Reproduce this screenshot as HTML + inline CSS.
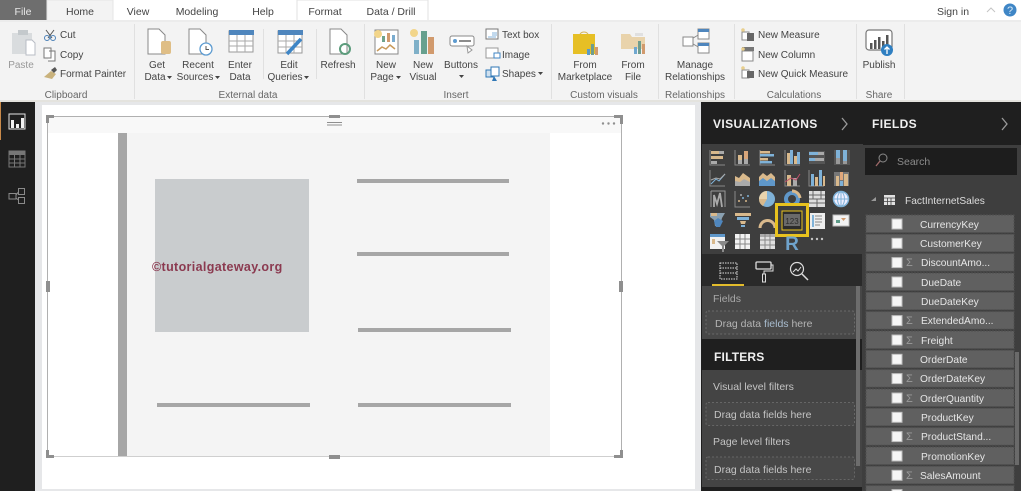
<!DOCTYPE html>
<html><head><meta charset="utf-8"><title>Power BI Desktop</title>
<style>
html,body{margin:0;padding:0;background:#fff;overflow:hidden;width:1021px;height:491px}
svg{display:block}
text{font-family:"Liberation Sans",sans-serif;font-size:10px;fill:#444}
.m{text-anchor:middle}
.g{font-size:10px;fill:#666}
.t{font-size:10.5px;fill:#444}
.h{font-size:12px;font-weight:bold;fill:#f0f0f0;letter-spacing:.4px}
.p{font-size:10.5px;fill:#c4c4c4}
.f{font-size:10.2px;fill:#e6e6e6}
.sg{font-size:11px;fill:#9a9a9a}
</style></head><body>
<svg width="1021" height="491" viewBox="0 0 1021 491" xmlns="http://www.w3.org/2000/svg">
<!-- tabs -->
<rect width="1021" height="21" fill="#fff"/>
<rect x="0" y="0" width="47" height="21" fill="#6e6e6e"/>
<text x="23" y="15" class="m t" style="fill:#e8e8e8">File</text>
<path d="M47 21V0H113V21" fill="#f3f3f3" stroke="#e6e6e6"/>
<text x="80" y="15" class="m t">Home</text>
<text x="138" y="15" class="m t">View</text>
<text x="197" y="15" class="m t">Modeling</text>
<text x="263" y="15" class="m t">Help</text>
<path d="M297 20V0H428V20" fill="#fff" stroke="#e2e2e2"/>
<text x="325" y="15" class="m t">Format</text>
<text x="391" y="15" class="m t">Data / Drill</text>
<text x="953" y="15" class="m t">Sign in</text>
<path d="M987 12l4-4 4 4" fill="none" stroke="#c4c4c4"/>
<circle cx="1010" cy="10" r="6.500" fill="#3f86c6"/>
<text x="1010" y="14" class="m" style="fill:#d8e8f4;font-size:11px">?</text>
<!-- ribbon -->
<rect y="21" width="1021" height="81" fill="#f3f3f3"/>
<rect y="20" width="1021" height="2" fill="#ececec"/>
<rect y="100" width="1021" height="2" fill="#e4e3de"/>
<g fill="#e0e0e0">
<rect x="134" y="24" width="1" height="75"/><rect x="263" y="29" width="1" height="50"/><rect x="316" y="29" width="1" height="50"/><rect x="364" y="24" width="1" height="75"/><rect x="551" y="24" width="1" height="75"/><rect x="658" y="24" width="1" height="75"/><rect x="734" y="24" width="1" height="75"/><rect x="856" y="24" width="1" height="75"/><rect x="904" y="24" width="1" height="75"/>
</g>
<!-- clipboard -->
<rect x="12" y="33" width="20" height="21" fill="#d9dcde"/><rect x="18" y="30" width="10" height="5" fill="#c4c9cc"/>
<path d="M26 40h6l3 3v12h-9z" fill="#fff" stroke="#b8bcc4"/>
<text x="21" y="68" class="m" style="fill:#999">Paste</text>
<path d="M46 30l6 8M54 30l-6 8" stroke="#555" fill="none"/><circle cx="47" cy="38" r="2.500" fill="none" stroke="#4d82b8"/><circle cx="53" cy="38" r="2.500" fill="none" stroke="#4d82b8"/>
<path d="M44 48h7l0 10h-7z M49 51h6v10h-7" fill="#fff" stroke="#777"/>
<path d="M44 77l7-6 5 3-4 5z" fill="#c9b27c"/><path d="M51 70l4-3 2 3-3 3z" fill="#555"/>
<text x="60" y="38">Cut</text><text x="60" y="58">Copy</text><text x="60" y="77">Format Painter</text>
<text x="66" y="98" class="m g">Clipboard</text>
<!-- external data -->
<path d="M148 29h11l6 6v19h-17z" fill="#fff" stroke="#888"/><rect x="161" y="41" width="10" height="13" rx="2" fill="#dfbe86"/>
<text x="157" y="68" class="m">Get</text><text x="155" y="80" class="m">Data</text><path d="M167 76h5l-2.500 3z" fill="#444"/>
<path d="M189 29h11l6 6v19h-17z" fill="#fff" stroke="#888"/><circle cx="206" cy="49" r="6" fill="#fff" stroke="#5d9bd0" stroke-width="1.300"/><path d="M206 46v3.500h3" stroke="#555" fill="none"/>
<text x="198" y="68" class="m">Recent</text><text x="195" y="80" class="m">Sources</text><path d="M215 76h5l-2.500 3z" fill="#444"/>
<rect x="229" y="31" width="24" height="21" fill="#fff" stroke="#999"/><rect x="229" y="30" width="25" height="5" fill="#4f86bd"/><path d="M229 41h24M229 46h24M237 35v17M245 35v17" stroke="#aaa"/>
<text x="240" y="68" class="m">Enter</text><text x="240" y="80" class="m">Data</text>
<rect x="278" y="31" width="24" height="22" fill="#fff" stroke="#999"/><rect x="278" y="30" width="25" height="5" fill="#4f86bd"/><path d="M278 41h24M278 47h24M286 35v18M294 35v18" stroke="#aaa"/><path d="M287 54l14-15" stroke="#3f86c6" stroke-width="3.500"/>
<text x="289" y="68" class="m">Edit</text><text x="285" y="80" class="m">Queries</text><path d="M304 76h5l-2.500 3z" fill="#444"/>
<text x="248" y="98" class="m g">External data</text>
<path d="M330 29h11l6 6v19h-17z" fill="#fff" stroke="#888"/><circle cx="345" cy="49" r="5" fill="none" stroke="#5c9c7c" stroke-width="2"/>
<text x="338" y="68" class="m">Refresh</text>
<!-- insert -->
<rect x="375" y="30" width="23" height="24" fill="#fff" stroke="#888"/><rect x="382" y="36" width="3" height="6" fill="#6fa38c"/><rect x="387" y="33" width="3" height="9" fill="#d19a6d"/><rect x="392" y="35" width="3" height="7" fill="#7aaccf"/><path d="M377 51l5-4 4 2 4-4 5 4" fill="none" stroke="#c99a5a" stroke-width="1.500"/><circle cx="378" cy="34" r="4" fill="#f2d58a"/>
<text x="386" y="68" class="m">New</text><text x="382" y="80" class="m">Page</text><path d="M396 76h5l-2.500 3z" fill="#444"/>
<rect x="414" y="40" width="5" height="14" fill="#7fb0c8"/><rect x="421" y="31" width="6" height="23" fill="#67a08e"/><rect x="428" y="37" width="6" height="17" fill="#d19a6d"/><circle cx="414" cy="33" r="4" fill="#f2d58a"/>
<text x="423" y="68" class="m">New</text><text x="423" y="80" class="m">Visual</text>
<rect x="450" y="36" width="24" height="10" rx="2" fill="#fff" stroke="#888"/><circle cx="455" cy="41" r="2" fill="#5d9bd0"/><path d="M459 41h12" stroke="#666" stroke-width="1.500"/><path d="M467 46l1 7 4-3z" fill="#fff" stroke="#999"/>
<text x="461" y="68" class="m">Buttons</text><path d="M459 75h5l-2.500 3z" fill="#444"/>
<rect x="486" y="29" width="12" height="10" fill="#fff" stroke="#777"/><path d="M492 33h5M492 35h5M488 37h8" stroke="#5d9bd0" stroke-width=".8"/>
<text x="502" y="38">Text box</text>
<rect x="486" y="48" width="12" height="10" fill="#fff" stroke="#999"/><rect x="494" y="53" width="6" height="5" fill="#fff" stroke="#3f86c6"/>
<text x="502" y="58">Image</text>
<rect x="486" y="70" width="7" height="7" fill="#cfe0ef" stroke="#2f77b5"/><rect x="491" y="67" width="8" height="9" fill="#fff" stroke="#2f77b5"/><path d="M492 81l2-5 3 5z" fill="#2f77b5"/>
<text x="502" y="77">Shapes</text><path d="M538 72h5l-2.500 3z" fill="#444"/>
<text x="456" y="98" class="m g">Insert</text>
<!-- custom visuals -->
<path d="M573 34h22v20h-22z" fill="#e6bf25"/><path d="M580 34a5 5 0 0 1 8 0" fill="none" stroke="#d5b45a"/>
<rect x="587" y="49" width="3" height="6" fill="#5b9bc8"/><rect x="591" y="44" width="3" height="11" fill="#6f9d8e"/><rect x="595" y="47" width="3" height="8" fill="#d19a6d"/>
<text x="585" y="68" class="m">From</text><text x="585" y="80" class="m">Marketplace</text>
<path d="M621 34h9l2 3h13v12h-24z" fill="#e9d3ab"/><rect x="635" y="33" width="8" height="3" fill="#e0e0e0"/>
<rect x="634" y="47" width="3" height="7" fill="#6fa7cf"/><rect x="638" y="41" width="3" height="13" fill="#6f9d8e"/><rect x="642" y="44" width="3" height="10" fill="#d19a6d"/>
<text x="633" y="68" class="m">From</text><text x="633" y="80" class="m">File</text>
<text x="604" y="98" class="m g">Custom visuals</text>
<!-- relationships -->
<path d="M688 41l12-7M688 41l12 7" stroke="#888" fill="none"/>
<rect x="683" y="37" width="10" height="9" fill="#fff" stroke="#888"/><rect x="698" y="29" width="11" height="10" fill="#fff" stroke="#888"/><rect x="698" y="29" width="11" height="3" fill="#4f86bd"/><rect x="698" y="43" width="11" height="10" fill="#fff" stroke="#888"/><rect x="698" y="43" width="11" height="3" fill="#4f86bd"/>
<text x="695" y="68" class="m">Manage</text><text x="695" y="80" class="m">Relationships</text>
<text x="695" y="98" class="m g">Relationships</text>
<!-- calculations -->
<g fill="#fff" stroke="#888"><rect x="742" y="32" width="7" height="8"/><rect x="742" y="51" width="11" height="10"/><rect x="742" y="70" width="7" height="8"/></g>
<rect x="747" y="33" width="7" height="8" fill="#666"/><rect x="747" y="71" width="7" height="7" fill="#666"/><rect x="742" y="47" width="12" height="4" fill="#777"/><circle cx="743" cy="30" r="1.800" fill="#e8cf8e"/><circle cx="743" cy="49" r="1.800" fill="#e8cf8e"/><circle cx="743" cy="68" r="1.800" fill="#e8cf8e"/>
<text x="758" y="38">New Measure</text><text x="758" y="58">New Column</text><text x="758" y="77">New Quick Measure</text>
<text x="794" y="98" class="m g">Calculations</text>
<!-- publish -->
<rect x="866" y="30" width="26" height="20" rx="3" fill="#fff" stroke="#777" stroke-width="1.200"/>
<rect x="870" y="43" width="2.500" height="6" fill="#555"/><rect x="874" y="40" width="2.500" height="9" fill="#555"/><rect x="878" y="37" width="2.500" height="12" fill="#555"/><rect x="882" y="41" width="2.500" height="8" fill="#555"/><rect x="886" y="35" width="2.500" height="14" fill="#555"/>
<circle cx="887" cy="50" r="6" fill="#2f7fc1"/><path d="M887 54v-7M884.500 49.500l2.500-2.500 2.500 2.500" stroke="#fff" stroke-width="1.300" fill="none"/>
<text x="879" y="68" class="m">Publish</text>
<text x="879" y="98" class="m g">Share</text>

<!-- left nav -->
<rect y="102" width="35" height="389" fill="#1f1f1f"/>
<rect x="0" y="102" width="1" height="38" fill="#c98a4a"/>
<rect x="9" y="114" width="16" height="15" fill="none" stroke="#e6e6e6"/>
<rect x="11" y="120" width="3" height="8" fill="#f2f2f2"/><rect x="16" y="124" width="3" height="4" fill="#f2f2f2"/><rect x="21" y="118" width="3" height="10" fill="#f2f2f2"/>
<rect x="9" y="151" width="16" height="16" fill="none" stroke="#777"/><rect x="9" y="151" width="16" height="4" fill="#777"/><path d="M9 159h16M9 163h16M14.500 155v12M20 155v12" stroke="#777"/>
<g fill="none" stroke="#8a8a8a"><rect x="9" y="193.500" width="7" height="5.500"/><rect x="18.500" y="188.500" width="6" height="6"/><rect x="18.500" y="197.500" width="6" height="6"/><path d="M16 195l2.500-3M16 198l2.500 2"/></g>
<!-- canvas -->
<rect x="35" y="102" width="666" height="389" fill="#e6e7e9"/>
<rect x="42" y="105" width="653" height="384" fill="#fff"/>
<rect x="47" y="116" width="575" height="17" fill="#f8f8f8"/>
<rect x="127" y="133" width="423" height="323" fill="#f4f4f4"/>
<rect x="118" y="133" width="9" height="323" fill="#a6a6a6"/>
<rect x="155" y="179" width="154" height="153" fill="#c9ccce"/>
<g fill="#a6a6a6">
<rect x="357" y="179" width="152" height="4"/><rect x="357" y="252" width="152" height="4"/><rect x="358" y="328" width="153" height="4"/><rect x="157" y="403" width="153" height="4"/><rect x="358" y="403" width="153" height="4"/>
</g>
<path d="M47.500 116.500H621.500V456.500" fill="none" stroke="#b0b0b0"/>
<path d="M47.500 116.500V456.500" fill="none" stroke="#b0b0b0"/>
<path d="M47.500 456.500H621.500" fill="none" stroke="#cfcfcf"/>
<g fill="#8f8f8f">
<path d="M46 115h8v3h-5v5h-3z"/><path d="M614 115h9v9h-3v-6h-6z"/><path d="M46 450h3v5h5v3h-8z"/><path d="M620 450h3v8h-9v-3h6z"/>
<rect x="46" y="281" width="4" height="11"/><rect x="619" y="281" width="4" height="11"/><rect x="329" y="455" width="11" height="4"/><rect x="329" y="115" width="11" height="3"/>
<rect x="327" y="122" width="15" height="1"/><rect x="327" y="124.500" width="15" height="1"/>
<circle cx="603" cy="123.500" r="1.200"/><circle cx="608.500" cy="123.500" r="1.200"/><circle cx="614" cy="123.500" r="1.200"/>
</g>
<text x="152" y="271" style="font-size:12.5px;font-weight:bold;fill:#8b3a50;letter-spacing:.35px">©tutorialgateway.org</text>

<!-- visualizations panel -->
<rect x="701" y="102" width="320" height="389" fill="#1f1f1f"/>
<text x="713" y="128" class="h">VISUALIZATIONS</text>
<path d="M842 118l5 6-5 6" fill="none" stroke="#9a9a9a" stroke-width="1.300"/>
<rect x="702" y="254" width="161" height="32" fill="#2a2a2a"/>
<rect x="702" y="144" width="161" height="110" fill="#3e3e3e"/>
<!-- viz icon row 1 -->
<g>
<path d="M710 150v15h15" fill="none" stroke="#888"/><rect x="711" y="151" width="8" height="3" fill="#d9b98c"/><rect x="719" y="151" width="5" height="3" fill="#aaa"/><rect x="711" y="156" width="12" height="3" fill="#d9b98c"/><rect x="711" y="161" width="6" height="3" fill="#aaa"/>
<path d="M735 150v15h15" fill="none" stroke="#888"/><rect x="738" y="155" width="4" height="9" fill="#d9b98c"/><rect x="744" y="151" width="4" height="13" fill="#d9a67a"/><rect x="738" y="160" width="4" height="4" fill="#aaa"/><rect x="744" y="159" width="4" height="5" fill="#aaa"/>
<path d="M760 150v15h15" fill="none" stroke="#888"/><rect x="760" y="151" width="10" height="2.500" fill="#d9b98c"/><rect x="760" y="154" width="14" height="2.500" fill="#7fb2d8"/><rect x="760" y="158" width="8" height="2.500" fill="#d9b98c"/><rect x="760" y="161" width="12" height="2.500" fill="#7fb2d8"/>
<path d="M785 150v15h15" fill="none" stroke="#888"/><rect x="787" y="153" width="3" height="11" fill="#d9b98c"/><rect x="790" y="150" width="3" height="14" fill="#7fb2d8"/><rect x="794" y="156" width="3" height="8" fill="#d9b98c"/><rect x="797" y="152" width="3" height="12" fill="#7fb2d8"/>
<rect x="809" y="151" width="16" height="13" fill="#555"/><rect x="809" y="152" width="9" height="3" fill="#7fb2d8"/><rect x="818" y="152" width="6" height="3" fill="#aaa"/><rect x="809" y="158" width="6" height="3" fill="#7fb2d8"/><rect x="815" y="158" width="9" height="3" fill="#aaa"/>
<rect x="834" y="150" width="16" height="15" fill="#555"/><rect x="836" y="150" width="4" height="8" fill="#7fb2d8"/><rect x="836" y="158" width="4" height="6" fill="#999"/><rect x="843" y="150" width="4" height="11" fill="#7fb2d8"/><rect x="843" y="161" width="4" height="3" fill="#999"/>
</g>
<!-- row 2 -->
<g>
<path d="M710 170v16h15" fill="none" stroke="#888"/><path d="M711 184l5-5 3 2 6-7" fill="none" stroke="#7fb2d8"/><path d="M711 180l5-2 4 1 5-5" fill="none" stroke="#aaa"/>
<path d="M735 186v-10l4 2 4-5 7 5v8z" fill="#d9b98c"/><path d="M735 186v-5l5 1 4-3 6 3v4z" fill="#aaa"/>
<path d="M759 177l4-4 4 3 4-3 4 4v4h-16z" fill="#d9b98c"/><path d="M759 181l4-3 4 3 4-3 4 3v5h-16z" fill="#5f97c9"/>
<path d="M785 170v16h15" fill="none" stroke="#888"/><rect x="787" y="175" width="4" height="11" fill="#d9b98c"/><rect x="793" y="178" width="4" height="8" fill="#aaa"/><path d="M785 182l6-4 5 2 4-6" stroke="#c0506a" fill="none"/>
<path d="M809 170v16h15" fill="none" stroke="#888"/><rect x="811" y="174" width="3" height="12" fill="#7fb2d8"/><rect x="815" y="177" width="3" height="9" fill="#d9b98c"/><rect x="819" y="170" width="3" height="16" fill="#7fb2d8"/><rect x="823" y="176" width="2" height="10" fill="#d9b98c"/>
<rect x="834" y="172" width="15" height="14" fill="#777"/><rect x="836" y="176" width="3" height="10" fill="#d9b98c"/><rect x="840" y="172" width="3" height="8" fill="#e0a77a"/><rect x="840" y="181" width="3" height="5" fill="#7fb2d8"/><rect x="844" y="174" width="4" height="12" fill="#d9b98c"/>
</g>
<!-- row 3 -->
<g>
<path d="M711 191v16M711 191h14v16" fill="none" stroke="#999"/><path d="M714 207v-12l3 9 3-11 2 14" fill="none" stroke="#aaa" stroke-width="1.800"/>
<path d="M735 191v16h15" fill="none" stroke="#888"/><circle cx="739" cy="201" r="1" fill="#d9b98c"/><circle cx="743" cy="198" r="1" fill="#7fb2d8"/><circle cx="746" cy="201" r="1" fill="#d9b98c"/><circle cx="741" cy="195" r="1" fill="#aaa"/><circle cx="748" cy="196" r="1" fill="#7fb2d8"/>
<circle cx="767" cy="199" r="8" fill="#7fb2d8"/><path d="M767 199V191a8 8 0 0 0-8 8z" fill="#e8d3ac"/><path d="M767 199H759a8 8 0 0 0 4 7z" fill="#d9b98c"/>
<circle cx="792" cy="199" r="6" fill="none" stroke="#5f97c9" stroke-width="4"/><path d="M792 191a8 8 0 0 1 8 7" fill="none" stroke="#d9b98c" stroke-width="3"/>
<rect x="809" y="191" width="16" height="16" fill="#ddd"/><path d="M809 195h16M809 199h16M809 203h16M817 199v8M813 191v8M821 191v8" stroke="#666"/>
<circle cx="841" cy="199" r="7.500" fill="#eef" stroke="#7fb2d8" stroke-width="1.500"/><path d="M834 199h15M841 192v15" stroke="#7fb2d8"/><ellipse cx="841" cy="199" rx="3.500" ry="7" fill="none" stroke="#7fb2d8"/>
</g>
<!-- row 4 -->
<g>
<path d="M710 213h15l-3 5-2 8h-5l-1-6-4-3z" fill="#8aa0b0"/><path d="M711 213h6v3h-6z" fill="#d9b98c"/><path d="M714 221l4-3 5 3-3 6h-4z" fill="#4f86bd"/>
<path d="M735 213h16v3h-16z" fill="#d9b98c"/><path d="M737 217h12v3h-12z" fill="#7fb2d8"/><path d="M740 221h6l-1 3h-4z" fill="#d9b98c"/><rect x="741" y="225" width="4" height="2" fill="#7fb2d8"/>
<path d="M760 228a7.500 7.500 0 0 1 15 0" fill="none" stroke="#d9b98c" stroke-width="3"/>
</g>
<!-- card selected -->
<rect x="776.500" y="204.500" width="31" height="31" fill="#3e3e3e" stroke="#e8c21e" stroke-width="3"/>
<rect x="782" y="211" width="20" height="19" fill="#2c2c2c" stroke="#e8c21e"/>
<rect x="784" y="214" width="16" height="12" fill="#6a6a6a"/>
<text x="792" y="224" class="m" style="font-size:8px;fill:#2c2c2c">123</text>
<rect x="810" y="213" width="15" height="16" fill="#eee"/><rect x="812" y="215" width="2" height="12" fill="#7fb2d8"/><path d="M815 216h7M815 219h7M815 222h7M815 225h5" stroke="#888"/>
<rect x="833" y="215" width="16" height="11" fill="#f2f2f2" stroke="#bbb"/><path d="M841 218h5l-2.500 3z" fill="#d19a6d"/><rect x="836" y="220" width="4" height="3" fill="#5d9b88"/>
<!-- row 5 -->
<rect x="710" y="234" width="15" height="15" fill="#f2f2f2"/><rect x="710" y="234" width="15" height="3" fill="#5f97c9"/><rect x="712" y="239" width="3" height="5" fill="#d9b98c"/><path d="M717 241h12l-5 5v6h-2v-6z" fill="#8a8a8a"/>
<rect x="735" y="234" width="15" height="15" fill="#f2f2f2"/><path d="M735 239h15M735 244h15M740 234v15M745 234v15" stroke="#888"/>
<rect x="760" y="234" width="15" height="15" fill="#e0e0e0"/><rect x="760" y="234" width="15" height="3" fill="#aaa"/><path d="M760 240h15M760 245h15M765 234v15M770 234v15" stroke="#888"/>
<text x="792" y="250" class="m" style="font-size:19px;font-weight:bold;fill:#6fa3cc">R</text>
<g fill="#c4c4c4"><circle cx="812" cy="239" r="1.200"/><circle cx="817" cy="239" r="1.200"/><circle cx="822" cy="239" r="1.200"/></g>
<!-- viz tabs -->
<rect x="720" y="263" width="17" height="16" fill="none" stroke="#ddd" stroke-dasharray="1.500 1"/><path d="M720 268h17M720 273h17" stroke="#ddd" stroke-dasharray="1.500 1"/>
<rect x="756" y="262" width="15" height="7" rx="1" fill="none" stroke="#ddd" stroke-width="1.300"/><path d="M771 265h2v6h-9v3" fill="none" stroke="#ddd"/><rect x="762.500" y="274" width="3" height="8" fill="none" stroke="#ddd"/>
<circle cx="797" cy="269" r="6.500" fill="none" stroke="#ddd" stroke-width="1.200"/><path d="M802 274l6 6" stroke="#ddd" stroke-width="1.500"/><path d="M793 272l3-3 2 2 3-4" fill="none" stroke="#ddd"/>
<rect x="712" y="284" width="32" height="2" fill="#e3bc2c"/>
<!-- fields well -->
<rect x="702" y="286" width="161" height="53" fill="#474747"/>
<text x="713" y="302" style="fill:#a8a8a8;font-size:10.500px">Fields</text>
<rect x="706" y="311" width="148.500" height="23" rx="2" fill="#4a4a4a" stroke="#6a6a6a" stroke-dasharray="2 2"/>
<text x="715" y="327" style="fill:#b4b4b4;font-size:10.500px">Drag data <tspan style="fill:#a9bdd0">fields</tspan> here</text>
<!-- filters -->
<rect x="702" y="339" width="161" height="31" fill="#1f1f1f"/>
<text x="714" y="361" class="h" style="letter-spacing:.2px">FILTERS</text>
<rect x="702" y="370" width="161" height="117" fill="#444"/>
<text x="713" y="390" class="p">Visual level filters</text>
<rect x="706" y="402.500" width="148.500" height="23" rx="2" fill="#484848" stroke="#666" stroke-dasharray="2 2"/>
<text x="714" y="418" class="p">Drag data fields here</text>
<text x="713" y="445" class="p">Page level filters</text>
<rect x="706" y="457" width="148.500" height="22.500" rx="2" fill="#484848" stroke="#666" stroke-dasharray="2 2"/>
<text x="714" y="473" class="p">Drag data fields here</text>
<rect x="856" y="286" width="4" height="180" fill="#6d6d6d"/>

<!-- fields panel -->
<text x="872" y="128" class="h">FIELDS</text>
<path d="M1002 118l5 6-5 6" fill="none" stroke="#9a9a9a" stroke-width="1.300"/>
<rect x="862" y="145" width="159" height="346" fill="#3e3e3e"/>
<rect x="865" y="148" width="152" height="27" fill="#1d1d1d"/>
<circle cx="883" cy="158" r="4" fill="none" stroke="#8a8a8a"/><path d="M880 161l-4 5" stroke="#a06a6a" stroke-width="1.300"/>
<text x="897" y="165" style="fill:#8c8c8c;font-size:10.500px">Search</text>
<path d="M871 201l5-4v4z" fill="#999"/>
<rect x="884" y="195" width="11" height="10" fill="#e2e2e2"/><path d="M884 198h11M884 201.500h11M887.500 198v7M891 198v7" stroke="#444" stroke-width=".8"/>
<text x="905" y="204" style="fill:#ddd;font-size:10.200px">FactInternetSales</text>
<!-- rows -->
<g fill="#606060" stroke="#505050" stroke-dasharray="2 1">
<rect x="866" y="215" width="148" height="17.500"/><rect x="866" y="234.300" width="148" height="17.500"/><rect x="866" y="253.600" width="148" height="17.500"/><rect x="866" y="273" width="148" height="17.500"/><rect x="866" y="292.300" width="148" height="17.500"/><rect x="866" y="311.600" width="148" height="17.500"/><rect x="866" y="331" width="148" height="17.500"/><rect x="866" y="350.300" width="148" height="17.500"/><rect x="866" y="369.600" width="148" height="17.500"/><rect x="866" y="389" width="148" height="17.500"/><rect x="866" y="408.300" width="148" height="17.500"/><rect x="866" y="427.600" width="148" height="17.500"/><rect x="866" y="447" width="148" height="17.500"/><rect x="866" y="466.300" width="148" height="17.500"/><rect x="866" y="485.600" width="148" height="17.500"/>
</g>
<g fill="#f6f6f6" stroke="#bdbdbd">
<rect x="892" y="219" width="10" height="10"/><rect x="892" y="238.300" width="10" height="10"/><rect x="892" y="257.600" width="10" height="10"/><rect x="892" y="277" width="10" height="10"/><rect x="892" y="296.300" width="10" height="10"/><rect x="892" y="315.600" width="10" height="10"/><rect x="892" y="335" width="10" height="10"/><rect x="892" y="354.300" width="10" height="10"/><rect x="892" y="373.600" width="10" height="10"/><rect x="892" y="393" width="10" height="10"/><rect x="892" y="412.300" width="10" height="10"/><rect x="892" y="431.600" width="10" height="10"/><rect x="892" y="451" width="10" height="10"/><rect x="892" y="470.300" width="10" height="10"/><rect x="892" y="489.600" width="10" height="10"/>
</g>
<g>
<text class="f" x="920" y="228">CurrencyKey</text>
<text class="f" x="920" y="247">CustomerKey</text>
<text class="f" x="921" y="266">DiscountAmo...</text>
<text class="f" x="921" y="286">DueDate</text>
<text class="f" x="921" y="305">DueDateKey</text>
<text class="f" x="921" y="324">ExtendedAmo...</text>
<text class="f" x="921" y="344">Freight</text>
<text class="f" x="920" y="363">OrderDate</text>
<text class="f" x="920" y="382">OrderDateKey</text>
<text class="f" x="920" y="402">OrderQuantity</text>
<text class="f" x="921" y="421">ProductKey</text>
<text class="f" x="921" y="440">ProductStand...</text>
<text class="f" x="921" y="460">PromotionKey</text>
<text class="f" x="920" y="479">SalesAmount</text>
</g>
<g>
<text class="sg" x="906" y="266">Σ</text><text class="sg" x="906" y="324">Σ</text><text class="sg" x="906" y="344">Σ</text><text class="sg" x="906" y="382">Σ</text><text class="sg" x="906" y="402">Σ</text><text class="sg" x="906" y="440">Σ</text><text class="sg" x="906" y="479">Σ</text>
</g>
<rect x="1015" y="352" width="4" height="113" fill="#6a6a6a"/>
</svg>
</body></html>
